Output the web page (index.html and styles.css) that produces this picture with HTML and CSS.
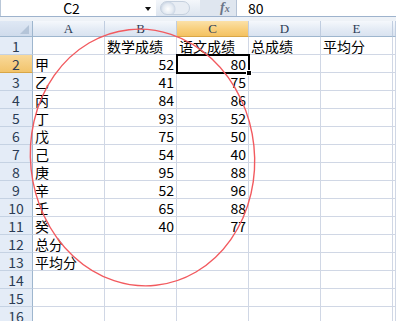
FILE: index.html
```html
<!DOCTYPE html>
<html>
<head>
<meta charset="utf-8">
<link rel="stylesheet" href="styles.css">
</head>
<body>
<div class="app">
  <div class="fbar">
    <div class="namebox"><span class="nb-text">C2</span><span class="nb-arrow"></span></div>
    <div class="grip"><span class="grip-knob"></span></div>
    <div class="fx">f<span class="fx-x">x</span></div>
    <div class="formula">80</div>
  </div>
  <div class="gap"></div>
  <div class="sheet">
    <div class="corner"><span class="corner-tri"></span></div>
    <div class="ch">A</div><div class="ch">B</div><div class="ch sel">C</div><div class="ch">D</div><div class="ch">E</div><div class="ch tail"></div>

    <div class="rh">1</div><div class="c"></div><div class="c">数学成绩</div><div class="c">语文成绩</div><div class="c">总成绩</div><div class="c">平均分</div><div class="c tail"></div>
    <div class="rh sel">2</div><div class="c">甲</div><div class="c n">52</div><div class="c n active">80<span class="handle"></span></div><div class="c"></div><div class="c"></div><div class="c tail"></div>
    <div class="rh">3</div><div class="c">乙</div><div class="c n">41</div><div class="c n">75</div><div class="c"></div><div class="c"></div><div class="c tail"></div>
    <div class="rh">4</div><div class="c">丙</div><div class="c n">84</div><div class="c n">86</div><div class="c"></div><div class="c"></div><div class="c tail"></div>
    <div class="rh">5</div><div class="c">丁</div><div class="c n">93</div><div class="c n">52</div><div class="c"></div><div class="c"></div><div class="c tail"></div>
    <div class="rh">6</div><div class="c">戊</div><div class="c n">75</div><div class="c n">50</div><div class="c"></div><div class="c"></div><div class="c tail"></div>
    <div class="rh">7</div><div class="c">己</div><div class="c n">54</div><div class="c n">40</div><div class="c"></div><div class="c"></div><div class="c tail"></div>
    <div class="rh">8</div><div class="c">庚</div><div class="c n">95</div><div class="c n">88</div><div class="c"></div><div class="c"></div><div class="c tail"></div>
    <div class="rh">9</div><div class="c">辛</div><div class="c n">52</div><div class="c n">96</div><div class="c"></div><div class="c"></div><div class="c tail"></div>
    <div class="rh">10</div><div class="c">壬</div><div class="c n">65</div><div class="c n">88</div><div class="c"></div><div class="c"></div><div class="c tail"></div>
    <div class="rh">11</div><div class="c">癸</div><div class="c n">40</div><div class="c n">77</div><div class="c"></div><div class="c"></div><div class="c tail"></div>
    <div class="rh">12</div><div class="c">总分</div><div class="c"></div><div class="c"></div><div class="c"></div><div class="c"></div><div class="c tail"></div>
    <div class="rh">13</div><div class="c">平均分</div><div class="c"></div><div class="c"></div><div class="c"></div><div class="c"></div><div class="c tail"></div>
    <div class="rh">14</div><div class="c"></div><div class="c"></div><div class="c"></div><div class="c"></div><div class="c"></div><div class="c tail"></div>
    <div class="rh">15</div><div class="c"></div><div class="c"></div><div class="c"></div><div class="c"></div><div class="c"></div><div class="c tail"></div>
    <div class="rh">16</div><div class="c"></div><div class="c"></div><div class="c"></div><div class="c"></div><div class="c"></div><div class="c tail"></div>
  </div>
  <svg class="mark" width="396" height="321" viewBox="0 0 396 321">
    <ellipse cx="142.5" cy="157.5" rx="112" ry="128.5" fill="none" stroke="#f25a5f" stroke-width="1.4" transform="rotate(-6 142.5 157.5)"/>
  </svg>
</div>
</body>
</html>
```

FILE: styles.css
```css
* { box-sizing: border-box; }
html, body { margin: 0; padding: 0; background: #fff; }
.app {
  position: relative;
  width: 396px;
  height: 321px;
  overflow: hidden;
  font-family: "Noto Sans CJK SC", "Liberation Sans", sans-serif;
  color: #000;
}
.fbar {
  display: flex;
  height: 17px;
  border-bottom: 1px solid #9eb3cd;
  background: #fff;
}
.namebox {
  width: 156px;
  position: relative;
  display: flex;
  align-items: center;
  justify-content: center;
  border-left: 1px solid #b9c7d8;
  font-size: 14px;
  line-height: 16px;
}
.nb-text { margin-right: 14px; }
.nb-arrow {
  position: absolute;
  right: 5px;
  top: 7px;
  width: 0; height: 0;
  border-left: 3px solid transparent;
  border-right: 3px solid transparent;
  border-top: 4px solid #111;
}
.grip {
  width: 44px;
  background: linear-gradient(#f4f7fb, #dde5ef);
  display: flex;
  align-items: center;
  padding-left: 4px;
}
.grip-knob {
  width: 30px;
  height: 14px;
  border-radius: 7px;
  border: 1px solid #c5d0de;
  background: radial-gradient(circle at 7px 7px, #ffffff 0, #e4eaf2 5px, #cfd9e6 7px, #e8edf4 8px);
}
.fx {
  width: 37px;
  background: #dfe6ef;
  border-right: 1px solid #b5c3d6;
  font-family: "Liberation Serif", serif;
  font-style: italic;
  font-weight: bold;
  font-size: 14px;
  color: #6a7487;
  line-height: 16px;
  padding-left: 20px;
}
.fx-x { font-size: 10px; }
.formula {
  flex: 1;
  font-size: 14px;
  line-height: 16px;
  padding-left: 11px;
}
.gap {
  height: 4px;
  background: #eef2f7;
}
.sheet {
  display: grid;
  grid-template-columns: 33px 72px 72px 72px 72px 72px 3px;
  grid-template-rows: 16px repeat(16, 18px);
}
.corner {
  background: linear-gradient(#dfe8f4, #cfdbec);
  border-right: 1px solid #9eb6ce;
  border-bottom: 1px solid #9eb6ce;
  position: relative;
}
.corner-tri {
  position: absolute;
  right: 3px;
  bottom: 2px;
  width: 0; height: 0;
  border-left: 9px solid transparent;
  border-bottom: 9px solid #b4c4d8;
}
.ch {
  background: linear-gradient(#f5f8fc 0%, #e4ebf5 55%, #d9e3f0 100%);
  border-right: 1px solid #c0cde0;
  border-bottom: 1px solid #9eb6ce;
  font-family: "Liberation Serif", serif;
  font-size: 13px;
  line-height: 14px;
  padding-top: 1px;
  color: #2b3c55;
  text-align: center;
}
.ch.sel {
  background: linear-gradient(#fbe1a8 0%, #f8cf7c 55%, #f4c262 100%);
  border-bottom-color: #d8a646;
}
.rh {
  background: #e4ecf7;
  border-right: 1px solid #9eb6ce;
  border-bottom: 1px solid #c5d2e3;
  font-size: 14px;
  line-height: 15px;
  padding-top: 2px;
  color: #2b3c55;
  text-align: center;
}
.rh.sel {
  background: linear-gradient(#f9d99a, #f2c46c);
  border-bottom-color: #d8a646;
}
.c {
  border-right: 1px solid #d0d7e5;
  border-bottom: 1px solid #d0d7e5;
  font-size: 14px;
  line-height: 15px;
  padding: 2px 2px 0;
  white-space: nowrap;
}
.c.tail { padding: 0; }
.c.n { text-align: right; }
.c.active {
  position: relative;
  outline: 2px solid #000;
  outline-offset: -1px;
}
.handle {
  position: absolute;
  right: -4px;
  bottom: -4px;
  width: 6px;
  height: 6px;
  background: #000;
  border: 1px solid #fff;
}
.mark {
  position: absolute;
  left: 0;
  top: 0;
  pointer-events: none;
}
```
